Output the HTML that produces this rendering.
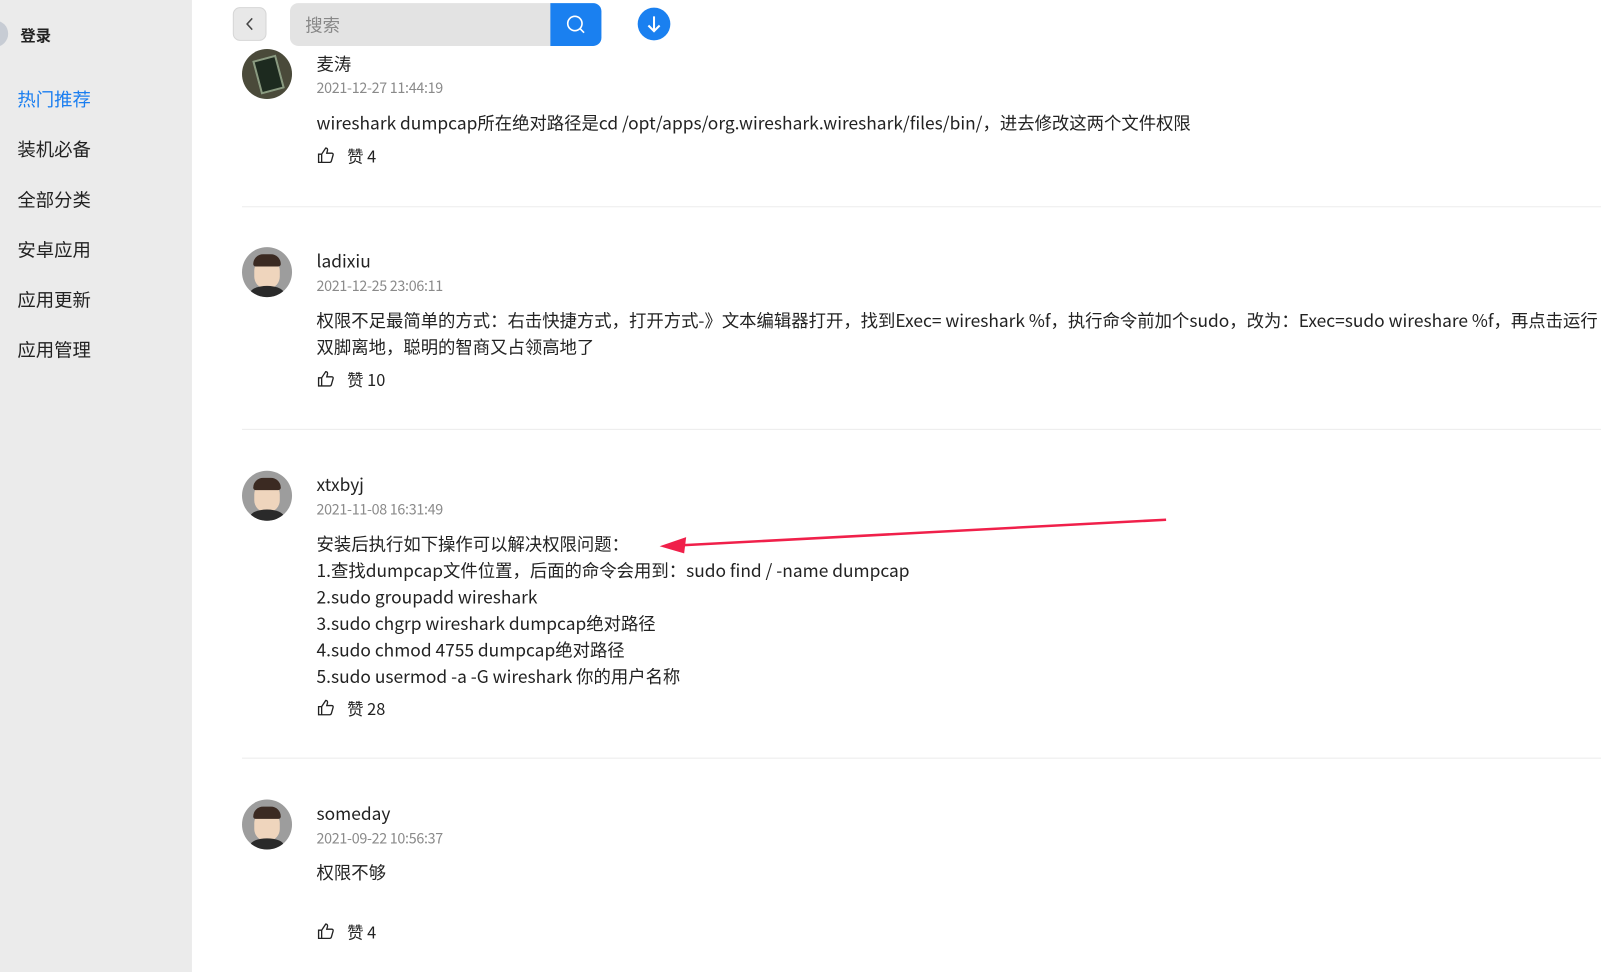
<!DOCTYPE html>
<html><head><meta charset="utf-8"><style>
html,body{margin:0;padding:0;background:#fff;overflow:hidden;width:1601px;height:972px}
#w{position:absolute;left:0;top:0;width:1568px;height:952px;transform:scale(1.0211);transform-origin:0 0;font-family:"Noto Sans CJK SC","Liberation Sans",sans-serif;color:#222}
.side{position:absolute;left:0;top:0;width:188px;height:952px;background:#ebebeb}
.side .it{position:absolute;left:17px;font-size:18px;color:#222;line-height:26px}
.a{position:absolute;left:237px;width:49px;height:49px;border-radius:50%;background:#9d9d9d;overflow:hidden}
.t{position:absolute;left:310px;font-size:17px;color:#222;white-space:nowrap;line-height:26px}
.d{position:absolute;left:310px;font-size:14px;color:#8a8a8a;line-height:18px;letter-spacing:-0.3px}
.hr{position:absolute;left:237px;right:0;height:1px;background:#ececec}
.lk{position:absolute;left:310px;font-size:16px;display:flex;align-items:center;gap:12px;line-height:20px}
</style></head><body><div id="w">
<div class="side">
<div style="position:absolute;left:-18px;top:20px;width:26px;height:26px;border-radius:50%;background:#c7ccd4"></div>
<div class="it" style="top:22px;font-size:15px;font-weight:bold;left:20px">登录</div>
<div class="it" style="top:84px;color:#1a7ef0">热门推荐</div>
<div class="it" style="top:133px">装机必备</div>
<div class="it" style="top:182px">全部分类</div>
<div class="it" style="top:231px">安卓应用</div>
<div class="it" style="top:280px">应用更新</div>
<div class="it" style="top:329px">应用管理</div>
</div>
<div style="position:absolute;left:228px;top:7px;width:33px;height:33px;border-radius:7px;background:#e8e8e8;border:1px solid #d6d6d6;box-sizing:border-box"><svg width="33" height="33" style="position:absolute;left:-1px;top:-1px"><path d="M19 11l-5 5.5 5 5.5" fill="none" stroke="#444" stroke-width="1.5"/></svg></div>
<div style="position:absolute;left:284px;top:3px;width:256px;height:42px;background:#e3e3e3;border-radius:8px 0 0 8px"></div>
<div style="position:absolute;left:299px;top:11px;font-size:17px;color:#888;line-height:26px">搜索</div>
<div style="position:absolute;left:539px;top:3px;width:50px;height:42px;background:#1a80f0;border-radius:0 8px 8px 0"><svg width="50" height="42"><circle cx="24" cy="20" r="7" fill="none" stroke="#fff" stroke-width="1.6"/><path d="M29 25l4 4" stroke="#fff" stroke-width="1.6"/></svg></div>
<svg style="position:absolute;left:624px;top:7px" width="33" height="33"><circle cx="16.5" cy="16.5" r="16" fill="#1a80f0"/><path d="M16.5 9v14M11 18l5.5 5.5 5.5-5.5" fill="none" stroke="#fff" stroke-width="2"/></svg>

<div class="a" style="top:48px;background:#4a4a3a"><div style="position:absolute;left:14px;top:8px;width:20px;height:30px;background:#1d2a1f;transform:rotate(-15deg);border:2px solid #8a9a80"></div></div>
<div class="t" style="top:49px">麦涛</div>
<div class="d" style="top:77px">2021-12-27 11:44:19</div>
<div class="t" style="top:107px">wireshark dumpcap所在绝对路径是cd /opt/apps/org.wireshark.wireshark/files/bin/，进去修改这两个文件权限</div>
<div class="lk" style="top:142px"><svg width="18" height="18" viewBox="0 0 18 18"><path d="M2 8h3v8H2zM5 8l4-6c1.5 0 2 1 1.7 2.5L10 7h5c1 0 1.5.8 1.2 1.8l-1.7 6c-.3.8-.8 1.2-1.6 1.2H5" fill="none" stroke="#222" stroke-width="1.3"/></svg><span>赞 4</span></div>
<div class="hr" style="top:202px"></div>

<div class="a" style="top:242px"><div style="position:absolute;left:12px;top:12px;width:25px;height:28px;border-radius:40%;background:#efd5bd"></div><div style="position:absolute;left:11px;top:7px;width:27px;height:12px;border-radius:12px 12px 3px 3px;background:#3b2a22"></div><div style="position:absolute;left:8px;top:38px;width:33px;height:14px;border-radius:50% 50% 0 0;background:#2a2a2a"></div></div>
<div class="t" style="top:242px">ladixiu</div>
<div class="d" style="top:271px">2021-12-25 23:06:11</div>
<div class="t" style="top:300px">权限不足最简单的方式：右击快捷方式，打开方式-》文本编辑器打开，找到Exec= wireshark %f，执行命令前加个sudo，改为：Exec=sudo wireshare %f，再点击运行<br>双脚离地，聪明的智商又占领高地了</div>
<div class="lk" style="top:361px"><svg width="18" height="18" viewBox="0 0 18 18"><path d="M2 8h3v8H2zM5 8l4-6c1.5 0 2 1 1.7 2.5L10 7h5c1 0 1.5.8 1.2 1.8l-1.7 6c-.3.8-.8 1.2-1.6 1.2H5" fill="none" stroke="#222" stroke-width="1.3"/></svg><span>赞 10</span></div>
<div class="hr" style="top:420px"></div>

<div class="a" style="top:461px"><div style="position:absolute;left:12px;top:12px;width:25px;height:28px;border-radius:40%;background:#efd5bd"></div><div style="position:absolute;left:11px;top:7px;width:27px;height:12px;border-radius:12px 12px 3px 3px;background:#3b2a22"></div><div style="position:absolute;left:8px;top:38px;width:33px;height:14px;border-radius:50% 50% 0 0;background:#2a2a2a"></div></div>
<div class="t" style="top:461px">xtxbyj</div>
<div class="d" style="top:490px">2021-11-08 16:31:49</div>
<div class="t" style="top:519px">安装后执行如下操作可以解决权限问题：<br>1.查找dumpcap文件位置，后面的命令会用到：sudo find / -name dumpcap<br>2.sudo groupadd wireshark<br>3.sudo chgrp wireshark dumpcap绝对路径<br>4.sudo chmod 4755 dumpcap绝对路径<br>5.sudo usermod -a -G wireshark 你的用户名称</div>
<div class="lk" style="top:683px"><svg width="18" height="18" viewBox="0 0 18 18"><path d="M2 8h3v8H2zM5 8l4-6c1.5 0 2 1 1.7 2.5L10 7h5c1 0 1.5.8 1.2 1.8l-1.7 6c-.3.8-.8 1.2-1.6 1.2H5" fill="none" stroke="#222" stroke-width="1.3"/></svg><span>赞 28</span></div>
<div class="hr" style="top:742px"></div>
<svg style="position:absolute;left:0;top:0" width="1568" height="952"><path d="M1142 509L668 534" stroke="#f0204a" stroke-width="2.5"/><path d="M646 535l26-9-2 16z" fill="#f0204a"/></svg>

<div class="a" style="top:783px"><div style="position:absolute;left:12px;top:12px;width:25px;height:28px;border-radius:40%;background:#efd5bd"></div><div style="position:absolute;left:11px;top:7px;width:27px;height:12px;border-radius:12px 12px 3px 3px;background:#3b2a22"></div><div style="position:absolute;left:8px;top:38px;width:33px;height:14px;border-radius:50% 50% 0 0;background:#2a2a2a"></div></div>
<div class="t" style="top:783px">someday</div>
<div class="d" style="top:812px">2021-09-22 10:56:37</div>
<div class="t" style="top:841px">权限不够</div>
<div class="lk" style="top:902px"><svg width="18" height="18" viewBox="0 0 18 18"><path d="M2 8h3v8H2zM5 8l4-6c1.5 0 2 1 1.7 2.5L10 7h5c1 0 1.5.8 1.2 1.8l-1.7 6c-.3.8-.8 1.2-1.6 1.2H5" fill="none" stroke="#222" stroke-width="1.3"/></svg><span>赞 4</span></div>
</div></body></html>
